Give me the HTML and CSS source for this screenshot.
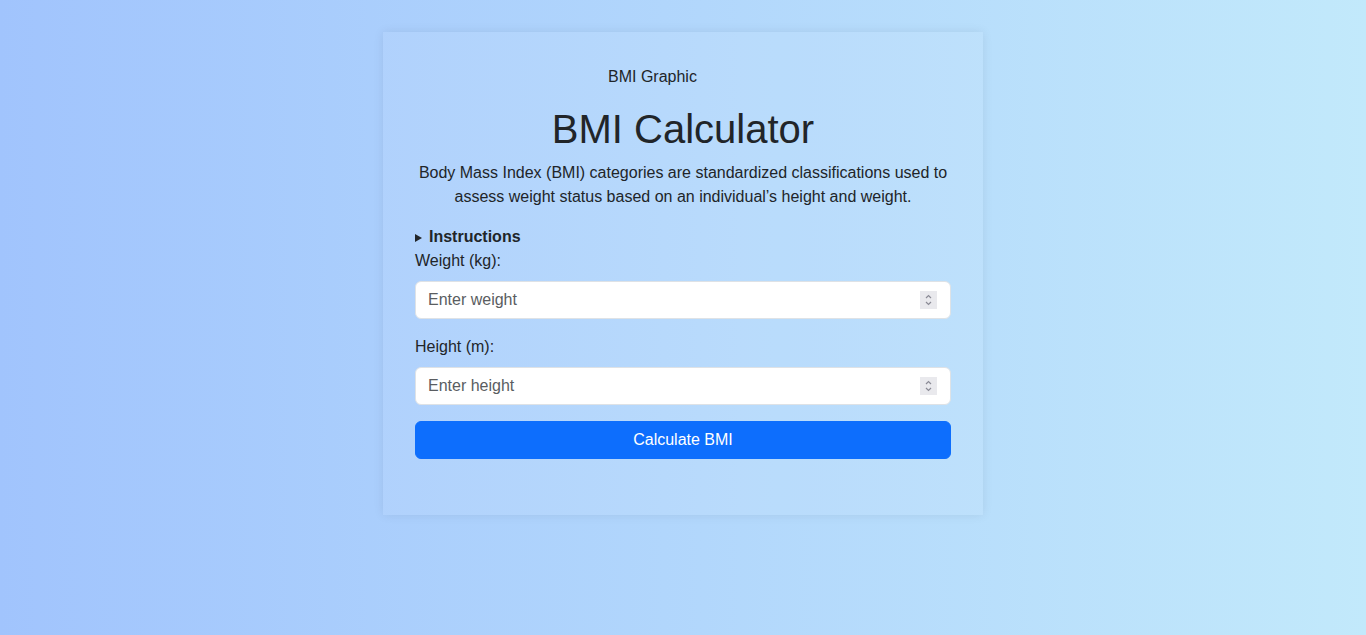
FILE: index.html
```html
<!DOCTYPE html>
<html lang="en">
<head>
<meta charset="utf-8">
<title>BMI Calculator</title>
<link rel="stylesheet" href="styles.css">
</head>
<body>
<main class="card">
  <div class="graphic">BMI Graphic</div>
  <h1 class="title">BMI Calculator</h1>
  <p class="intro">Body Mass Index (BMI) categories are standardized classifications used to assess weight status based on an individual’s height and weight.</p>
  <details class="instructions">
    <summary>Instructions</summary>
  </details>
  <form class="form" onsubmit="return false;">
    <div class="field">
      <label class="label" for="weight">Weight (kg):</label>
      <div class="input-wrap">
        <input class="input" id="weight" type="number" placeholder="Enter weight">
        <span class="spin" aria-hidden="true">
          <svg width="17" height="18" viewBox="0 0 17 18"><path d="M6 7 L8.5 4.5 L11 7 M6 11 L8.5 13.5 L11 11" fill="none" stroke="#8b8b96" stroke-width="1.2"/></svg>
        </span>
      </div>
    </div>
    <div class="field">
      <label class="label" for="height">Height (m):</label>
      <div class="input-wrap">
        <input class="input" id="height" type="number" placeholder="Enter height">
        <span class="spin" aria-hidden="true">
          <svg width="17" height="18" viewBox="0 0 17 18"><path d="M6 7 L8.5 4.5 L11 7 M6 11 L8.5 13.5 L11 11" fill="none" stroke="#8b8b96" stroke-width="1.2"/></svg>
        </span>
      </div>
    </div>
    <button class="btn" type="submit">Calculate BMI</button>
  </form>
</main>
</body>
</html>
```
FILE: styles.css
```css
html, body {
  height: 100%;
}
body {
  margin: 0;
  font-family: "Liberation Sans", Arial, sans-serif;
  font-size: 16px;
  line-height: 24px;
  color: #212529;
  background: linear-gradient(to right, #a1c4fd, #c2e9fb);
}
.card {
  box-sizing: border-box;
  width: 600px;
  margin: 32px auto 0;
  padding: 33px 32px 56px;
  background: rgba(255, 255, 255, 0.08);
  box-shadow: 0 0 10px rgba(0, 0, 0, 0.08);
}
.graphic {
  width: 150px;
  height: 24px;
  margin: 0 auto 16px;
}
.title {
  margin: 0 0 8px;
  font-size: 40px;
  line-height: 48px;
  font-weight: 400;
  text-align: center;
}
.intro {
  margin: 0 0 16px;
  text-align: center;
}
.instructions summary {
  display: flex;
  align-items: center;
  font-weight: 700;
  cursor: pointer;
  list-style: none;
}
.instructions summary::-webkit-details-marker {
  display: none;
}
.instructions summary::before {
  content: "";
  width: 0;
  height: 0;
  margin: 1px 7px 0 0;
  border-top: 4px solid transparent;
  border-bottom: 4px solid transparent;
  border-left: 7px solid #212529;
}
.form {
  display: flex;
  flex-direction: column;
}
.field {
  display: flex;
  flex-direction: column;
  margin-bottom: 16px;
}
.label {
  margin-bottom: 8px;
}
.input-wrap {
  position: relative;
  display: flex;
}
.input {
  flex: 1;
  box-sizing: border-box;
  height: 38px;
  padding: 6px 40px 6px 12px;
  font-family: inherit;
  font-size: 16px;
  line-height: 24px;
  color: #212529;
  background: #fff;
  border: 1px solid #dee2e6;
  border-radius: 6px;
  -moz-appearance: textfield;
}
.input::-webkit-inner-spin-button,
.input::-webkit-outer-spin-button {
  -webkit-appearance: none;
  margin: 0;
}
.input::placeholder {
  color: #5a5d61;
}
.spin {
  position: absolute;
  top: 10px;
  right: 14px;
  width: 17px;
  height: 18px;
  background: #e9e9ed;
  pointer-events: none;
}
.spin svg {
  display: block;
}
.btn {
  height: 38px;
  padding: 6px 12px;
  font-family: inherit;
  font-size: 16px;
  line-height: 24px;
  color: #fff;
  background: #0d6efd;
  border: 1px solid #0d6efd;
  border-radius: 6px;
  cursor: pointer;
}
```
